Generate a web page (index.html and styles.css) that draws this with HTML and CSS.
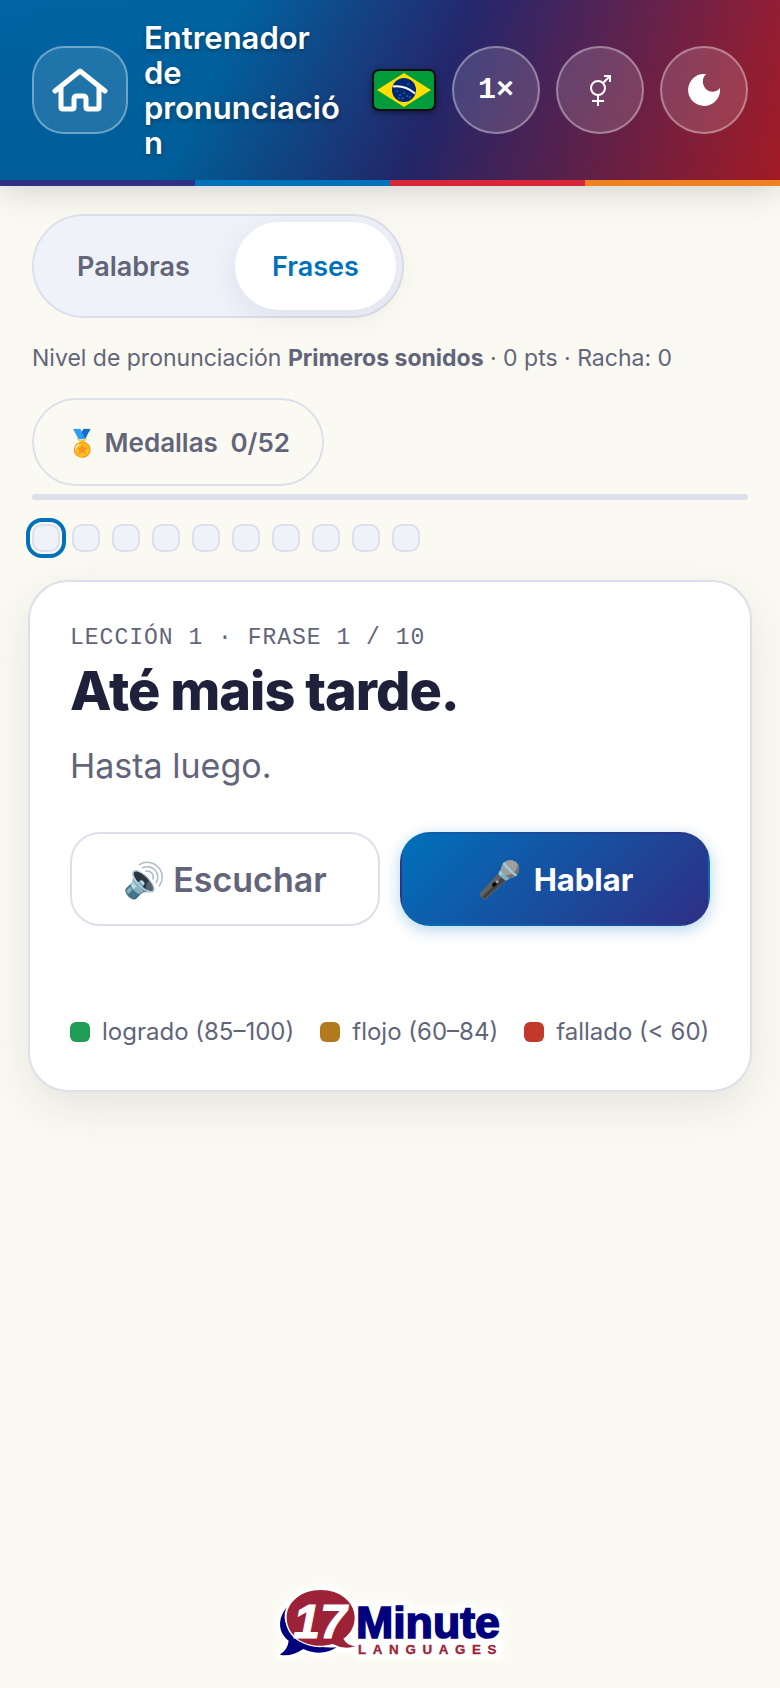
FILE: index.html
```html
<!DOCTYPE html>
<html lang="es">
<head>
    <meta charset="UTF-8">
    <meta name="viewport" content="width=device-width, initial-scale=1.0">
    <title>Entrenador de pronunciación</title>
    <link rel="stylesheet" href="styles.css">
</head>
<body>
    <header class="topbar">
        <a class="home-link" href="#" aria-label="Inicio">
            <svg class="home-icon" viewBox="0 0 56 46" aria-hidden="true">
                <path d="M3 24 L28 4 L53 24 M9 20 V40 Q9 42 11 42 H20 Q22 42 22 40 V32 Q22 29 25 29 H31 Q34 29 34 32 V40 Q34 42 36 42 H45 Q47 42 47 40 V20" />
            </svg>
        </a>
        <h1 class="title">Entrenador de pronunciación</h1>
        <svg class="flag" viewBox="0 0 64 42" role="img" aria-label="Brasil">
            <rect x="1" y="1" width="62" height="40" rx="6" fill="#009b3a" stroke="#0b0f14" stroke-width="2" />
            <path d="M32 4 L59 21 L32 38 L5 21 Z" fill="#fedf00" />
            <circle cx="32" cy="21" r="12" fill="#002776" />
            <path d="M21 17.5 Q33 16 43 24.5" fill="none" stroke="#fff" stroke-width="2" />
            <g fill="#b9c8e6">
                <circle cx="25" cy="22" r=".6" /><circle cx="28" cy="26" r=".6" /><circle cx="31" cy="29" r=".6" />
                <circle cx="35" cy="27" r=".6" /><circle cx="38" cy="28" r=".6" /><circle cx="32" cy="24" r=".6" />
                <circle cx="36" cy="15" r=".5" /><circle cx="27" cy="29" r=".5" />
            </g>
        </svg>
        <div class="tools">
            <button class="tool speed" type="button" aria-label="Velocidad">1×</button>
            <button class="tool" type="button" aria-label="Voz">
                <svg class="voice-icon" viewBox="0 0 24 34" aria-hidden="true">
                    <circle cx="10" cy="15" r="7" />
                    <path d="M15 10 L21 4 M16 3 H22 V9 M10 22 V33 M4 28 H16" />
                </svg>
            </button>
            <button class="tool" type="button" aria-label="Modo oscuro">
                <svg class="moon-icon" viewBox="0 0 32 32" aria-hidden="true">
                    <path d="M18 0 A16 16 0 1 0 32 14 C27 20 20 18 17 14 C14 9 14 4 18 0 Z" />
                </svg>
            </button>
        </div>
    </header>
    <div class="stripes"><span></span><span></span><span></span><span></span></div>

    <main class="content">
        <div class="tabs">
            <button class="tab" type="button">Palabras</button>
            <button class="tab active" type="button">Frases</button>
        </div>

        <p class="status">Nivel de pronunciación <strong>Primeros sonidos</strong> · 0 pts · Racha: 0</p>

        <button class="medals" type="button"><span class="medal-emoji">🏅</span> Medallas <span class="medal-count">0/52</span></button>
        <div class="progress"></div>

        <div class="steps">
            <span class="step current"></span>
            <span class="step"></span>
            <span class="step"></span>
            <span class="step"></span>
            <span class="step"></span>
            <span class="step"></span>
            <span class="step"></span>
            <span class="step"></span>
            <span class="step"></span>
            <span class="step"></span>
        </div>

        <section class="card">
            <p class="eyebrow">Lección 1 · Frase 1 / 10</p>
            <h2 class="phrase" lang="pt-BR">Até mais tarde.</h2>
            <p class="translation">Hasta luego.</p>
            <div class="actions">
                <button class="action listen" type="button"><span>🔊</span>Escuchar</button>
                <button class="action speak" type="button"><span class="mic">🎤</span>Hablar</button>
            </div>
            <ul class="legend">
                <li><i class="swatch good"></i>logrado (85–100)</li>
                <li><i class="swatch weak"></i>flojo (60–84)</li>
                <li><i class="swatch bad"></i>fallado (&lt; 60)</li>
            </ul>
        </section>
    </main>

    <footer class="footer">
        <svg class="logo" viewBox="0 0 780 354" role="img" aria-label="17 Minute Languages">
            <g class="logo-halo">
                <ellipse cx="182" cy="143" rx="103" ry="84" />
                <path d="M78 115 C50 155 62 190 86 212 Q80 240 60 250 Q90 262 130 238 Q190 256 230 232 L285 232 L240 190" />
                <path d="M296 110 H440 V128 H600 V115 H630 V130 H716 V252 H296 Z" />
            </g>
            <path fill="#00007d" d="M80 112 C50 150 56 190 86 212 Q84 238 59 254 Q92 262 130 237 Q185 262 230 232 Q150 238 104 196 C72 168 68 138 80 112 Z" />
            <path class="logo-bubble" d="M182 60 C240 60 284 96 284 143 C284 170 270 192 250 206 Q260 226 286 229 Q252 240 218 222 C146 242 80 202 80 143 C80 96 124 60 182 60 Z" />
            <text class="logo-number" x="100" y="205">17</text>
            <text class="logo-minute" x="288" y="205">Minute</text>
            <text class="logo-languages" x="294" y="253">LANGUAGES</text>
        </svg>
    </footer>
</body>
</html>
```
FILE: styles.css
```css
* {
    margin: 0;
    padding: 0;
    box-sizing: border-box;
}

body {
    font-family: Inter, 'Liberation Sans', sans-serif;
    background: #fbfaf2;
    color: #62657a;
    min-height: 100vh;
    display: flex;
    flex-direction: column;
}

button {
    font-family: inherit;
    color: inherit;
    cursor: pointer;
}

.topbar {
    display: flex;
    align-items: center;
    gap: 16px;
    padding: 20px 32px;
    background: linear-gradient(rgba(0, 0, 0, 0), rgba(0, 0, 0, 0.06)), linear-gradient(112deg, #0063a3 0%, #0063a0 28%, #25276d 56%, #ac1c27 100%);
    color: white;
    box-shadow: 0 8px 36px rgba(30, 30, 60, 0.22);
}

.home-link {
    display: flex;
    align-items: center;
    justify-content: center;
    width: 96px;
    height: 88px;
    flex-shrink: 0;
    background: rgba(255, 255, 255, 0.12);
    border: 2px solid rgba(255, 255, 255, 0.35);
    border-radius: 32px;
}

.home-icon {
    width: 56px;
    height: 46px;
    fill: none;
    stroke: white;
    stroke-width: 5;
    stroke-linecap: round;
    stroke-linejoin: round;
}

.title {
    flex: 1;
    min-width: 0;
    padding-right: 12px;
    font-size: 31px;
    font-weight: 600;
    line-height: 35px;
    overflow-wrap: anywhere;
    text-shadow: 0 2px 4px rgba(0, 0, 0, 0.35);
}

.flag {
    width: 64px;
    height: 42px;
    flex-shrink: 0;
    filter: drop-shadow(0 2px 3px rgba(0, 0, 0, 0.4));
}

.tools {
    display: flex;
    gap: 16px;
}

.tool {
    display: flex;
    align-items: center;
    justify-content: center;
    width: 88px;
    height: 88px;
    background: rgba(255, 255, 255, 0.14);
    border: 2px solid rgba(255, 255, 255, 0.35);
    border-radius: 50%;
}

.speed {
    font-family: 'Liberation Mono', monospace;
    font-size: 30px;
    font-weight: 700;
}

.voice-icon {
    width: 24px;
    height: 34px;
    fill: none;
    stroke: white;
    stroke-width: 2;
}

.moon-icon {
    width: 32px;
    height: 32px;
    fill: white;
}

.stripes {
    display: grid;
    grid-template-columns: repeat(4, 1fr);
    height: 6px;
    position: relative;
}

.stripes span:nth-child(1) {
    background: #2e2f85;
}

.stripes span:nth-child(2) {
    background: #0071bb;
}

.stripes span:nth-child(3) {
    background: #d9273a;
}

.stripes span:nth-child(4) {
    background: #ef8122;
}

.content {
    padding: 28px 32px 0;
}

.tabs {
    display: inline-flex;
    gap: 8px;
    padding: 6px;
    background: #eff2f9;
    border: 2px solid #dddfea;
    border-radius: 52px;
}

.tab {
    height: 88px;
    padding: 0 37px;
    border: none;
    border-radius: 44px;
    background: none;
    font-size: 27px;
    font-weight: 600;
}

.tab.active {
    background: white;
    color: #0071bb;
    box-shadow: 0 8px 32px rgba(30, 30, 60, 0.08);
}

.status {
    margin: 22px 0;
    font-size: 23px;
    line-height: 36px;
}

.medals {
    display: block;
    height: 88px;
    padding: 0 32px;
    background: none;
    border: 2px solid #dddfea;
    border-radius: 44px;
    font-size: 26px;
    font-weight: 600;
}

.medal-count {
    margin-left: 6px;
}

.progress {
    height: 6px;
    margin-top: 8px;
    background: #dde0eb;
    border-radius: 3px;
}

.steps {
    display: flex;
    gap: 12px;
    margin: 24px 0 28px;
}

.step {
    width: 28px;
    height: 28px;
    background: #eff2f9;
    border: 2px solid #dddfea;
    border-radius: 10px;
}

.step.current {
    outline: 4px solid #0071bb;
    outline-offset: 2px;
}

.card {
    margin: 0 -4px;
    padding: 40px 40px 42px;
    background: white;
    border: 2px solid #dddfea;
    border-radius: 40px;
    box-shadow: 0 16px 48px rgba(30, 30, 60, 0.1);
}

.eyebrow {
    font-family: 'Liberation Mono', monospace;
    font-size: 23px;
    line-height: 32px;
    letter-spacing: 1px;
    text-transform: uppercase;
}

.phrase {
    color: #1f2039;
    font-size: 54px;
    font-weight: 800;
    line-height: 74px;
    letter-spacing: -1px;
}

.translation {
    margin-top: 12px;
    font-size: 34px;
    line-height: 52px;
}

.actions {
    display: grid;
    grid-template-columns: 1fr 1fr;
    gap: 20px;
    margin-top: 40px;
}

.action {
    display: flex;
    align-items: center;
    justify-content: center;
    gap: 8px;
    height: 94px;
    border: 2px solid #dddfea;
    border-radius: 30px;
    background: white;
    font-size: 34px;
    font-weight: 600;
}

.speak {
    gap: 12px;
    border-color: transparent;
    background: linear-gradient(135deg, #0071bb, #2e2f85);
    color: white;
    font-size: 31px;
    font-weight: 700;
    box-shadow: 0 4px 16px rgba(0, 113, 187, 0.3);
}

.mic {
    font-size: 36px;
}

.legend {
    display: flex;
    flex-wrap: wrap;
    gap: 12px 26px;
    margin-top: 90px;
    list-style: none;
    font-size: 24px;
    line-height: 32px;
}

.legend li {
    display: flex;
    align-items: center;
    gap: 12px;
}

.swatch {
    width: 20px;
    height: 20px;
    border-radius: 6px;
}

.good {
    background: #1f9d55;
}

.weak {
    background: #b27a1c;
}

.bad {
    background: #c0392b;
}

.footer {
    margin-top: auto;
    display: flex;
    justify-content: center;
}

.logo {
    width: 260px;
    height: 118px;
    font-family: 'Liberation Sans', sans-serif;
    font-weight: bold;
}

.logo-halo {
    fill: white;
    stroke: white;
    stroke-width: 28;
    stroke-linejoin: round;
    filter: blur(6px);
}

.logo-bubble {
    fill: #9c2337;
    stroke: white;
    stroke-width: 8;
    paint-order: stroke;
}

.logo-number {
    fill: white;
    stroke: white;
    stroke-width: 3;
    font-size: 144px;
    font-style: italic;
}

.logo-minute {
    fill: #00007d;
    stroke: #00007d;
    stroke-width: 5;
    font-size: 134px;
}

.logo-languages {
    fill: #9c2337;
    stroke: #9c2337;
    stroke-width: 1;
    font-size: 40px;
    letter-spacing: 20px;
}
```
